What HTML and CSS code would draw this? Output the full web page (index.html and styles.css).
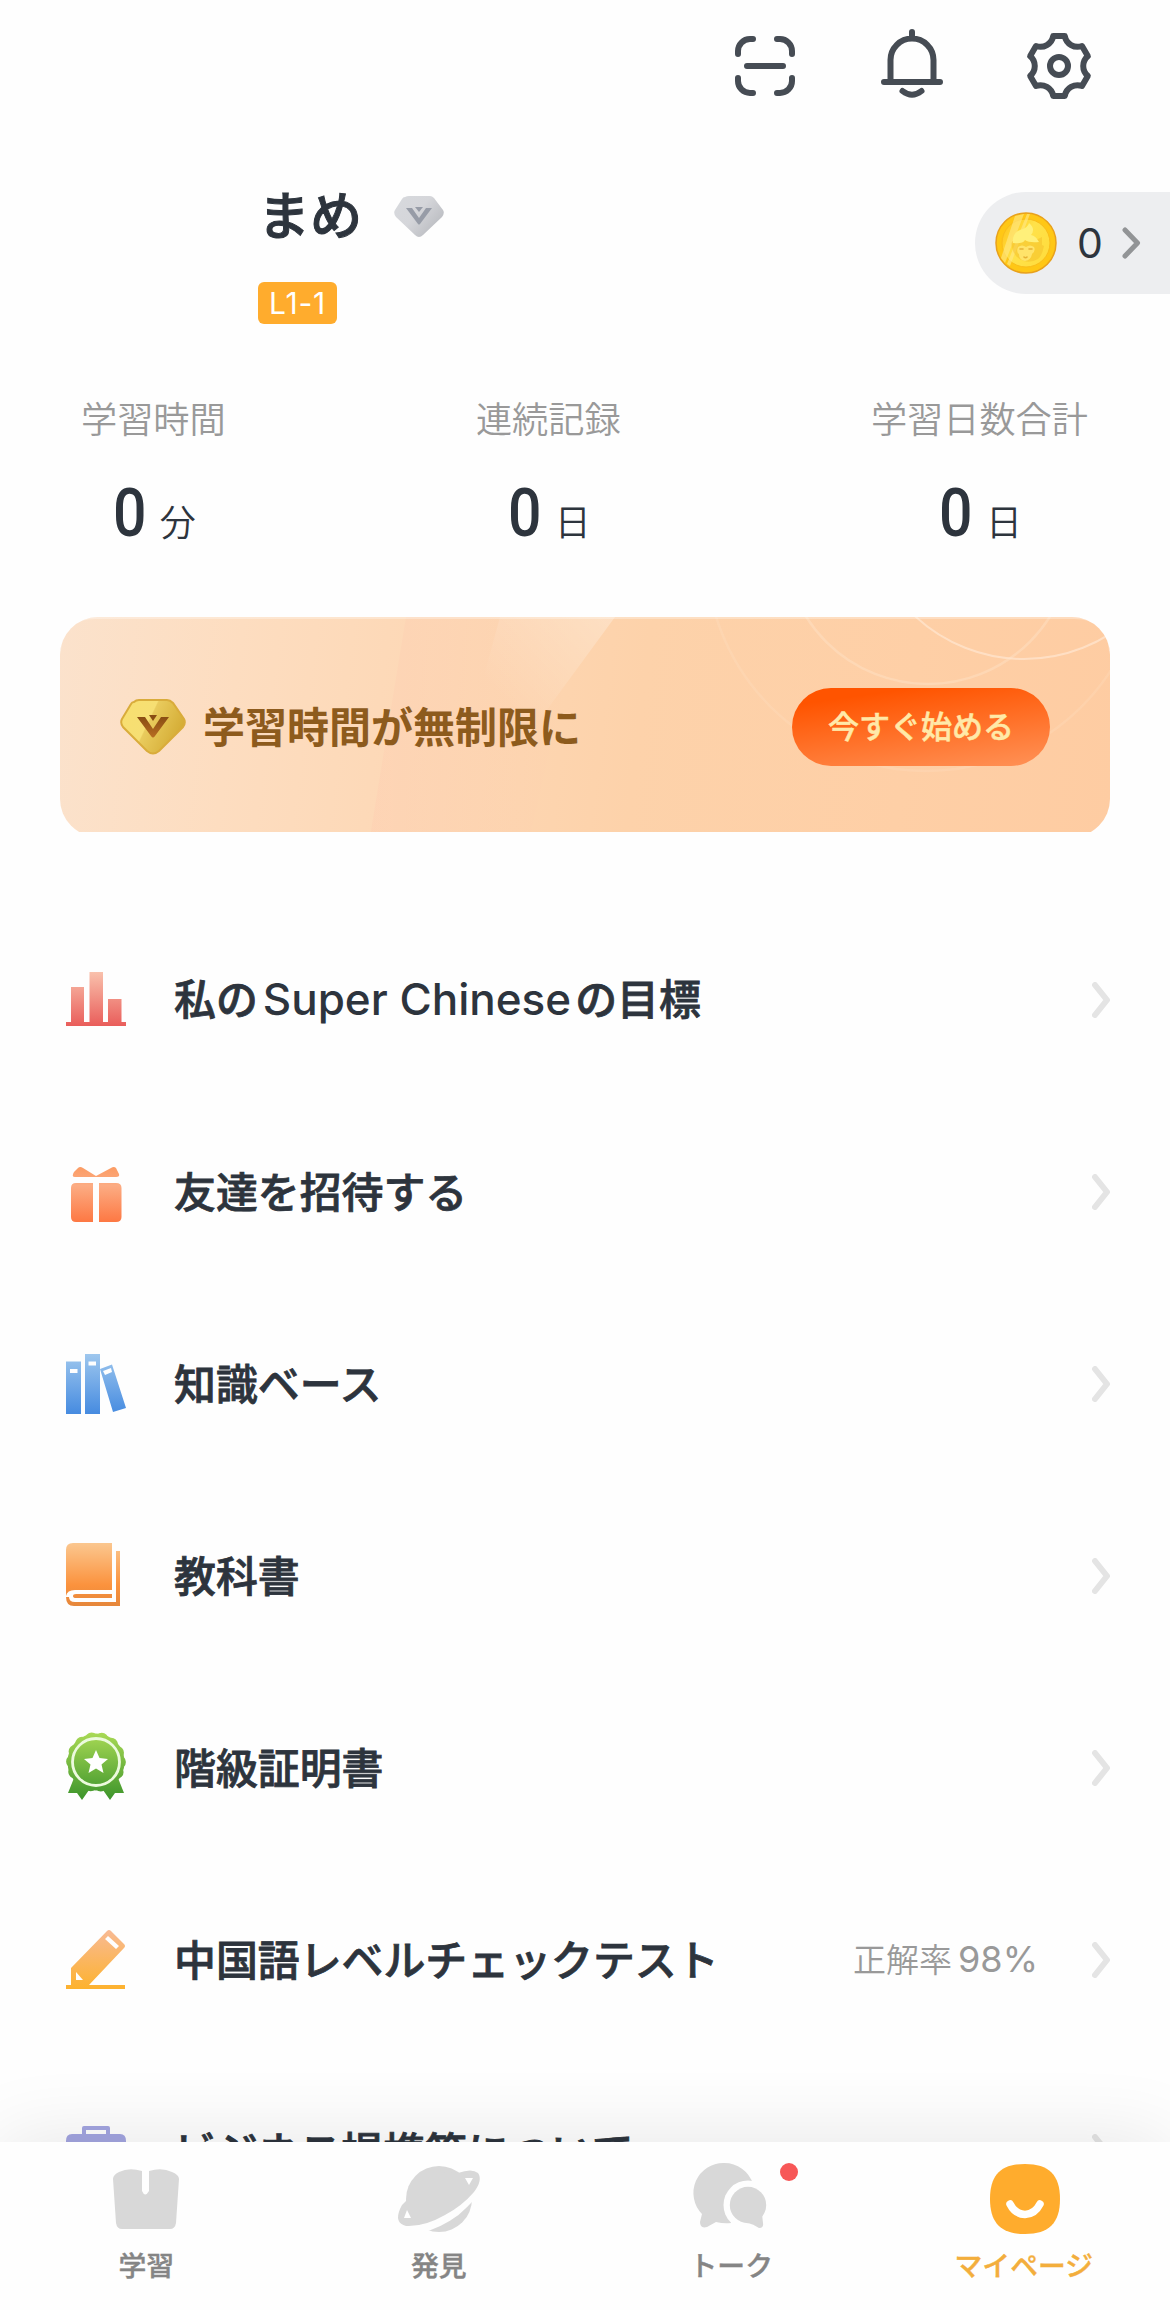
FILE: index.html
```html
<!DOCTYPE html>
<html lang="ja">
<head>
<meta charset="utf-8">
<title>マイページ</title>
<link rel="stylesheet" href="styles.css">
</head>
<body>
<div class="app">
  <main class="content">
    <header class="toolbar">
      <svg class="tool" viewBox="-36 -36 72 72"><path d="M-27-12v-3a12 12 0 0 1 12-12h3M27-12v-3a12 12 0 0 0-12-12h-3M-27 12v3a12 12 0 0 0 12 12h3M27 12v3a12 12 0 0 1-12 12h-3M-18 0h36"/></svg>
      <svg class="tool" viewBox="-36 -36 72 72"><path d="M-21.500 16V-6a21.500 21.500 0 0 1 43 0V16M-28 16h56M0-34v6M-9.500 25q9.500 7.500 19 0"/></svg>
      <svg class="tool" viewBox="-36 -36 72 72"><path d="M-5.800-29.900H5.800A13 13 0 0 0 23-20L28.800-9.900A13 13 0 0 0 28.800 9.900L23 20A13 13 0 0 0 5.800 29.900H-5.800A13 13 0 0 0-23 20L-28.800 9.900A13 13 0 0 0-28.800-9.900L-23-20A13 13 0 0 0-5.800-29.900Z"/><circle r="9"/></svg>
    </header>

    <section class="profile">
      <div class="identity">
        <div class="name-row">
          <h1 class="name">まめ</h1>
          <svg class="gem" width="50" height="42" viewBox="0 0 50 42">
            <defs><linearGradient id="silver" x1="0" x2="1" y1="0" y2=".7"><stop stop-color="#d7d9dd"/><stop offset=".5" stop-color="#d5d6da"/><stop offset="1" stop-color="#b8babf"/></linearGradient></defs>
            <path fill="url(#silver)" d="M11 1Q13 0 15 0H36Q38 0 40 2L49 14Q51 17 48 21L29 39Q25 43 21 39L2 21Q-1 17 1 14L8 3Q9 1 11 1Z"/>
            <path fill="#979ca7" d="M12 12h6l7 10 7-10h6L26 28q-1 1-2 0Z"/><path fill="#979ca7" d="M21 11h8l-4 5Z"/>
          </svg>
        </div>
        <span class="level">L1-1</span>
      </div>
      <div class="coins">
        <svg width="62" height="62" viewBox="0 0 62 62">
          <defs><linearGradient id="coin" x1="0" x2="1" y1=".2" y2=".8"><stop stop-color="#ffc71c"/><stop offset=".45" stop-color="#ffe24a"/><stop offset="1" stop-color="#ffdc3c"/></linearGradient></defs>
          <circle cx="31" cy="31" r="30" fill="#ffc715" stroke="#e8a11c" stroke-width="1.500"/>
          <circle cx="31" cy="31" r="24" fill="url(#coin)" stroke="#f9bd1b" stroke-width="1"/>
          <path fill="#ffe98a" opacity=".6" d="M20 4 29 2 10 51 6 46ZM32 2h3L15 54l-3-2Z"/>
          <path fill="#f3bd2a" d="M17 35q-2-5 3-8l23 0 4-2v8l2 1q-2 10-6 13-7 4-14 2-10-3-12-14Z" opacity=".5"/>
          <path fill="#fff07a" d="M18 31q-1-10 7-13 8-2 9-7 7 6 2 12 5 1 8 7-10 1-14-2-2 4-12 3Z"/>
          <path fill="#ffe36a" d="M23 35q4-3 8 0 4-3 8 0 2 4-2 7-1 6-7 7-6-1-6-7-3-2-1-7Z"/>
          <path d="M25 37h3m6 0h3M29 45q1.500 1.500 3 0" fill="none" stroke="#e6b235" stroke-width="1.600" stroke-linecap="round"/>
        </svg>
        <span class="coin-count">0</span>
        <svg class="coin-arrow" width="20" height="32" viewBox="0 0 20 32"><path d="M3 3 15.500 16 3 29"/></svg>
      </div>
    </section>

    <section class="stats">
      <div class="stat"><div class="stat-label">学習時間</div><div class="stat-value"><b>0</b><span>分</span></div></div>
      <div class="stat"><div class="stat-label">連続記録</div><div class="stat-value"><b>0</b><span>日</span></div></div>
      <div class="stat"><div class="stat-label">学習日数合計</div><div class="stat-value"><b>0</b><span>日</span></div></div>
    </section>

    <div class="banner-window">
      <section class="banner">
        <svg class="banner-art" width="1050" height="220" viewBox="0 0 1050 220">
          <defs>
            <linearGradient id="shine" gradientUnits="userSpaceOnUse" x1="545" y1="0" x2="450" y2="90"><stop stop-color="#fff" stop-opacity=".26"/><stop offset="1" stop-color="#fff" stop-opacity="0"/></linearGradient>
            <linearGradient id="blush" x1="0" x2="1"><stop stop-color="#ffc8ae" stop-opacity=".28"/><stop offset="1" stop-color="#ffc8ae" stop-opacity="0"/></linearGradient>
          </defs>
          <path fill="url(#blush)" d="M346 0H520L470 220H310Z"/>
          <path fill="url(#shine)" d="M440 0H555L478 105 420 220H380Z"/>
          <g fill="none" stroke="#ffe7d2">
            <circle cx="964" cy="-118" r="160" stroke-width="2" opacity=".7"/>
            <circle cx="868" cy="-77" r="144" stroke-width="2.500" opacity=".35"/>
            <circle cx="866" cy="-66" r="220" stroke-width="2.500" opacity=".18"/>
          </g>
          <path d="M0 34Q2 1 36 1H1014Q1048 1 1050 34" fill="none" stroke="#fff" stroke-width="2" opacity=".3"/>
        </svg>
        <svg class="gold" width="66" height="56" viewBox="0 0 66 56">
          <defs><linearGradient id="gold" x1="0" x2="1" y1="0" y2=".4"><stop stop-color="#f8df70"/><stop offset=".5" stop-color="#f6df73"/><stop offset=".52" stop-color="#e9cb5d"/><stop offset="1" stop-color="#d5ad36"/></linearGradient>
          <linearGradient id="bronze" x2="0" y2="1"><stop stop-color="#894d13"/><stop offset="1" stop-color="#b86d22"/></linearGradient></defs>
          <path fill="url(#gold)" stroke="#d9ac3b" stroke-width="2" d="M14 3Q16 1 19 1H47Q50 1 53 4L64 20Q66 24 63 28L39 52Q33 57 27 52L3 28Q0 24 2 20L11 5Q12 3 14 3Z"/>
          <path fill="url(#bronze)" d="M17 18h8l8 12 8-12h8L35 37q-2 3-4 0Z"/><path fill="#894d13" d="M29 16h8l-4 6Z"/>
        </svg>
        <span class="banner-title">学習時間が無制限に</span>
        <button class="start">今すぐ始める</button>
      </section>
    </div>

    <nav class="menu">
      <a class="item">
        <svg class="icon" viewBox="0 0 64 80"><defs><linearGradient id="red" gradientUnits="userSpaceOnUse" x1="0" x2="0" y1="12" y2="66"><stop stop-color="#f9c1ac"/><stop offset="1" stop-color="#e95d5a"/></linearGradient></defs><path fill="url(#red)" d="M7 27H20V62H7ZM25.500 12H39V62H25.500ZM44 39H57.500V62H44ZM2 62H62V66H2Z"/></svg>
        <span class="title">私の<span class="latin">Super Chinese</span>の目標</span>
        <svg class="arrow" viewBox="0 0 20 36"><path d="M3 3 15 18 3 33"/></svg>
      </a>
      <a class="item">
        <svg class="icon" viewBox="0 0 64 80"><defs><linearGradient id="coral" gradientUnits="userSpaceOnUse" x1="0" x2="0" y1="14" y2="70"><stop stop-color="#fb9b62"/><stop offset=".35" stop-color="#fcac83"/><stop offset="1" stop-color="#fd7843"/></linearGradient></defs><path fill="url(#coral)" d="M11 25Q7 25 10 20L14 16Q16 14 19 16L32 24 47 16Q50 14 52 16L55 22Q56 25 52 25ZM12 31H29V70H12Q7 70 7 65V36Q7 31 12 31ZM35 31H52Q57.500 31 57.500 36V65Q57.500 70 52 70H35Z"/></svg>
        <span class="title">友達を招待する</span>
        <svg class="arrow" viewBox="0 0 20 36"><path d="M3 3 15 18 3 33"/></svg>
      </a>
      <a class="item">
        <svg class="icon" viewBox="0 0 64 80"><defs><linearGradient id="blue" gradientUnits="userSpaceOnUse" x1="0" x2="0" y1="10" y2="70"><stop stop-color="#9ec7ee"/><stop offset="1" stop-color="#468be0"/></linearGradient></defs><path fill="url(#blue)" fill-rule="evenodd" d="M2 17.500H17V70H2ZM6 25V29H13.500V25ZM21 10H36V70H21ZM24.500 17.500V21.500H32V17.500ZM36 25 48 20.500 62 64 49 68ZM39 27 41 31 48 28 47 24Z"/></svg>
        <span class="title">知識ベース</span>
        <svg class="arrow" viewBox="0 0 20 36"><path d="M3 3 15 18 3 33"/></svg>
      </a>
      <a class="item">
        <svg class="icon" viewBox="0 0 64 80"><defs><linearGradient id="orange" gradientUnits="userSpaceOnUse" x1="0" x2="0" y1="7" y2="70"><stop stop-color="#fbc78f"/><stop offset=".67" stop-color="#fb923d"/><stop offset="1" stop-color="#e5873b"/></linearGradient></defs><path fill="url(#orange)" d="M9 7H48V54H11Q3 54 2 60V14Q2 7 9 7ZM52 15H56V70H10Q2 70 2 61L5 61Q5 66 11 66H52ZM12 58H48V62H12Q9 62 9 60T12 58Z"/></svg>
        <span class="title">教科書</span>
        <svg class="arrow" viewBox="0 0 20 36"><path d="M3 3 15 18 3 33"/></svg>
      </a>
      <a class="item">
        <svg class="icon" viewBox="0 0 64 80"><defs><linearGradient id="green" gradientUnits="userSpaceOnUse" x1="0" x2="0" y1="4" y2="70"><stop stop-color="#aada55"/><stop offset="1" stop-color="#3f962c"/></linearGradient></defs><path fill="url(#green)" d="M10 50 4 65 13 65 18 72 25 62H39L46 72 51 65 60 65 54 50Z"/><circle cx="32" cy="34" r="28.500" fill="url(#green)"/><circle cx="32" cy="34" r="23.200" fill="none" stroke="url(#green)" stroke-width="13.400" stroke-linecap="round" stroke-dasharray="0 10.412"/><circle cx="32" cy="34" r="23.500" fill="none" stroke="#ecfadd" stroke-width="2.800"/><path fill="#fff" d="M32 22 35.500 30 44 31 37.500 36.500 39.500 45 32 40.500 24.500 45 26.500 36.500 20 31 28.500 30Z"/></svg>
        <span class="title">階級証明書</span>
        <svg class="arrow" viewBox="0 0 20 36"><path d="M3 3 15 18 3 33"/></svg>
      </a>
      <a class="item">
        <svg class="icon" viewBox="0 0 64 80"><defs><linearGradient id="amber" gradientUnits="userSpaceOnUse" x1="0" x2="0" y1="10" y2="69"><stop stop-color="#f8ba94"/><stop offset="1" stop-color="#fdb22e"/></linearGradient></defs><path fill="url(#amber)" fill-rule="evenodd" d="M2 65H7V48L43 11Q45 9 47 11L60 24Q62 26 60 28L25 65H61V69H2ZM12 52V60H19ZM44 16 41 19 52 29 55 26Z"/></svg>
        <span class="title">中国語レベルチェックテスト</span>
        <span class="note">正解率<span class="note-number">98%</span></span>
        <svg class="arrow" viewBox="0 0 20 36"><path d="M3 3 15 18 3 33"/></svg>
      </a>
      <a class="item">
        <svg class="icon" viewBox="0 0 64 80"><path fill="#a3a5e0" fill-rule="evenodd" d="M18 22V16Q18 14 20 14H44Q46 14 46 16V22H56Q62 22 62 29V65H2V29Q2 22 8 22ZM22 18V22H42V18Z"/></svg>
        <span class="title">ビジネス提携等について</span>
        <svg class="arrow" viewBox="0 0 20 36"><path d="M3 3 15 18 3 33"/></svg>
      </a>
    </nav>
  </main>

  <nav class="tabs">
    <a class="tab">
      <svg width="90" height="76" viewBox="0 0 90 76"><path fill="#d8d8d8" d="M12 17Q12 13 18 10Q28 5 41 9V29Q44 36 48 29V9Q61 5 71 10Q78 13 78 17L75 61Q74 67 69 67H21Q16 67 15 61Z"/></svg>
      <span>学習</span>
    </a>
    <a class="tab">
      <svg width="90" height="76" viewBox="0 0 90 76"><circle cx="45" cy="37" r="33" fill="#d8d8d8"/><path d="M87 20Q81 33 61 50 45 62 25 67" fill="none" stroke="#fefefe" stroke-width="9"/><path fill="#d8d8d8" d="M64 11Q78 6 84 11 89 18 80 30 68 44 51 53 30 65 12 64 0 61 6 47 8 42 12 39 32 5 64 11Z"/><path fill="#fff" d="M71 16h8l-4 7ZM13 48 10 56h7Z"/></svg>
      <span>発見</span>
    </a>
    <a class="tab">
      <svg width="90" height="76" viewBox="0 0 90 76"><path fill="#d8d8d8" d="M38 1A30 30 0 0 0 16 52L14 60Q14 67 21 65L30 60Q38 62 45 61L67 22A30 30 0 0 0 38 1Z"/><circle cx="62" cy="43" r="24.500" fill="#fefefe"/><path fill="#fefefe" d="M46 60h30v12H46Z"/><circle cx="62" cy="43" r="18.200" fill="#d8d8d8"/><path fill="#d8d8d8" d="M62 61Q67 62 73 66 78 66 77 61L76 52Z"/></svg>
      <i class="unread"></i>
      <span>トーク</span>
    </a>
    <a class="tab current">
      <svg width="90" height="76" viewBox="0 0 90 76"><path fill="#ffac2d" d="M46 2C70 2 81 13 81 37S70 72 46 72 11 61 11 37 22 2 46 2Z"/><path d="M31 42Q36 52 46 52.500 56 52 61 42" fill="none" stroke="#fff" stroke-width="7.500" stroke-linecap="round"/></svg>
      <span>マイページ</span>
    </a>
  </nav>
</div>
</body>
</html>
```

FILE: styles.css
```css
* { box-sizing: border-box; }
body {
  margin: 0;
  background: #fefefe;
  color: #2d343d;
  font-family: "Noto Sans CJK JP", sans-serif;
}
h1 { margin: 0; }
svg { display: block; flex: none; }

.app { display: flex; flex-direction: column; height: 2310px; overflow: hidden; }
.content { flex: 1; min-height: 0; overflow: hidden; }

.toolbar { display: flex; justify-content: flex-end; gap: 75px; height: 132px; padding: 30px 75px 0 0; }
.tool { width: 72px; height: 72px; overflow: visible; fill: none; stroke: #464c54; stroke-width: 6; stroke-linecap: round; stroke-linejoin: round; }

.profile { display: flex; justify-content: space-between; height: 263px; padding: 60px 0 0 258px; }
.name-row { display: flex; align-items: center; gap: 32px; height: 50px; }
.name { width: 104px; font-size: 52px; line-height: 50px; font-weight: 500; white-space: nowrap; padding-bottom: 8px; -webkit-text-stroke: 1px currentColor; }
.level {
  display: flex; align-items: center; justify-content: center;
  width: 79px; height: 42px; margin-top: 40px; border-radius: 6px;
  background: #ffac2d; color: #fff; font: 400 30px/42px Inter, sans-serif; letter-spacing: .8px;
}
.coins {
  display: flex; align-items: center; width: 195px; height: 102px; padding-left: 20px;
  border-radius: 51px 0 0 51px; background: #edeef0;
}
.coin-count { margin-left: 20px; font: 400 41px/60px Inter, sans-serif; }
.coin-arrow { margin-left: 19px; fill: none; stroke: #929496; stroke-width: 5; stroke-linecap: round; stroke-linejoin: round; }

.stats { display: flex; justify-content: space-between; height: 222px; padding: 0 82px 0 81px; }
.stat { display: flex; flex-direction: column; align-items: center; }
.stat-label { font-size: 36.2px; line-height: 44px; font-weight: 350; color: #999; }
.stat-value { display: flex; align-items: baseline; gap: 15px; height: 80px; margin-top: 34px; }
.stat-value b { width: 34px; font: 500 67px/80px Roboto, sans-serif; transform: scaleX(.88); }
.stat-value span { font-size: 36px; line-height: 50px; font-weight: 350; }

.banner-window { height: 215px; margin: 0 60px; overflow: hidden; }
.banner {
  position: relative; display: flex; align-items: center; height: 220px; padding: 0 60px 0 60px;
  overflow: hidden; border-radius: 38px;
  background: linear-gradient(97deg, #fbe2cc 0%, #fdddc0 17%, #fdd8b6 34%, #fdd2aa 55%, #fecfa6 80%, #fecca2 100%);
}
.banner-art { position: absolute; inset: 0; }
.banner-title { position: relative; margin: 0 0 4px 17px; font-size: 42px; line-height: 60px; font-weight: 700; color: #8d5b1d; white-space: nowrap; }
.gold { position: relative; }
.start {
  position: relative; width: 258px; height: 78px; margin-left: auto; padding: 0 0 4px; border: 0; border-radius: 39px;
  background: linear-gradient(172deg, #ff5400 15%, #ff9257 100%);
  color: #ffe9a8; font: 500 31px/74px "Noto Sans CJK JP", sans-serif; -webkit-text-stroke: .5px currentColor;
}

.menu { padding: 72px 58px 0 64px; }
.item { display: flex; align-items: center; height: 192px; }
.icon { width: 64px; height: 80px; margin-right: 46px; }
.title { padding-bottom: 4px; font-size: 41.9px; line-height: 60px; font-weight: 500; white-space: nowrap; -webkit-text-stroke: .8px currentColor; }
.latin { margin: 0 4px 0 5px; font-family: Inter, sans-serif; font-size: 44px; -webkit-text-stroke: 0; }
.arrow { width: 20px; height: 36px; margin-left: auto; fill: none; stroke: #e4e4e4; stroke-width: 6; stroke-linecap: round; stroke-linejoin: round; }
.note { margin-left: auto; padding-bottom: 3px; font-size: 33px; line-height: 50px; font-weight: 350; color: #999; white-space: nowrap; }
.note-number { margin-left: 6px; font-family: Inter, sans-serif; font-size: 36px; font-weight: 400; }
.note + .arrow { margin-left: 54px; }

.tabs {
  position: relative; display: grid; grid-template-columns: repeat(4, 1fr); height: 168px; padding-top: 20px;
  background: #fefefe; box-shadow: 0 0 80px rgba(0, 0, 0, .1);
}
.tab { position: relative; display: flex; flex-direction: column; align-items: center; font-size: 27.8px; line-height: 40px; font-weight: 500; color: #858585; -webkit-text-stroke: .4px currentColor; }
.tab span { margin-top: 6px; }
.tab.current { color: #f3ae3c; }
.unread { position: absolute; left: 195px; top: 1px; width: 18px; height: 18px; border-radius: 50%; background: #f75757; }
```
